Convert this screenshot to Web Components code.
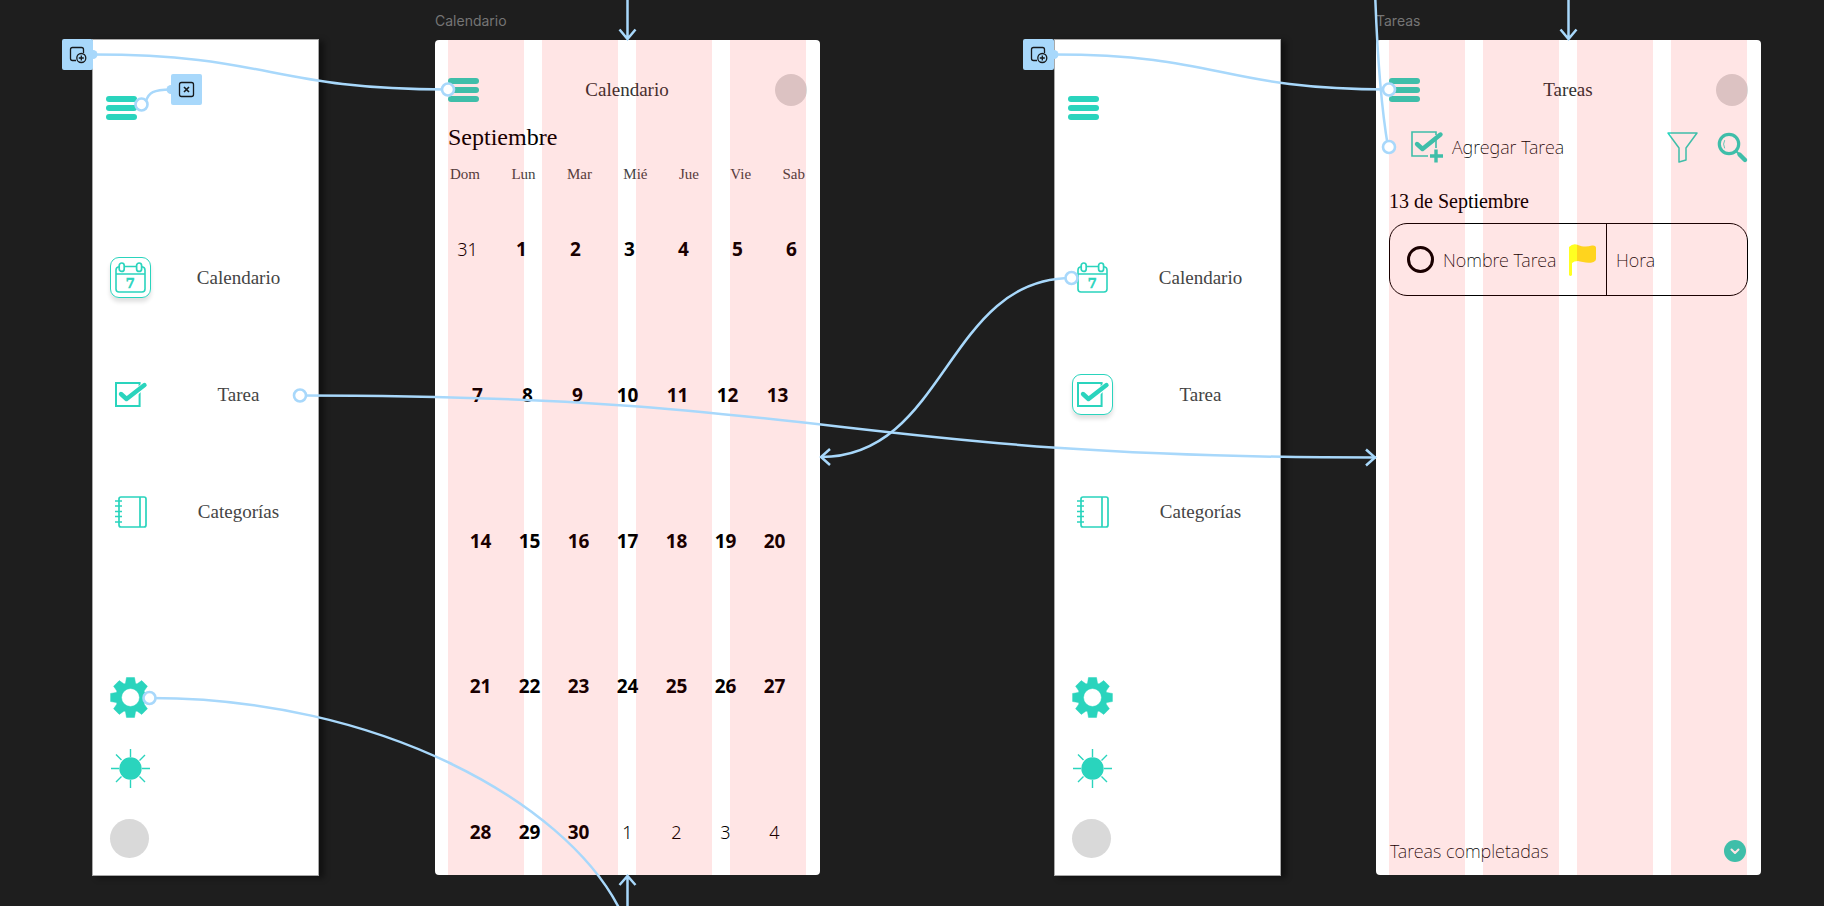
<!DOCTYPE html>
<html lang="es">
<head>
<meta charset="utf-8">
<title>Prototipo</title>
<style>
  html, body { margin: 0; height: 100%; }
  body {
    background: #1e1e1e;
    --teal: #2ad4bd;
    --link: #a8d8fb;
    --slab: "Liberation Serif", serif;
    --sans: "Noto Sans", sans-serif;
    font-family: var(--sans);
  }
  /* places of the frames on the free canvas */
  #menu-a { left: 92px; top: 39px; }
  #menu-b { left: 1054px; top: 39px; }
  #calendar { left: 435px; top: 40px; }
  #tasks { left: 1376px; top: 40px; }
  #add-a { left: 62px; top: 39px; }
  #add-b { left: 1023px; top: 39px; }
  #close-a { left: 171px; top: 74px; }
</style>
</head>
<body>
<design-canvas>
  <side-menu id="menu-a" active="calendario"></side-menu>
  <phone-frame id="calendar" name="Calendario"><month-view></month-view></phone-frame>
  <side-menu id="menu-b" active="tarea"></side-menu>
  <phone-frame id="tasks" name="Tareas"><task-view></task-view></phone-frame>
  <flow-links slot="over"></flow-links>
  <action-badge slot="over" id="add-a" kind="add" label="Abrir superposición"></action-badge>
  <action-badge slot="over" id="close-a" kind="close" label="Cerrar superposición"></action-badge>
  <action-badge slot="over" id="add-b" kind="add" label="Abrir superposición"></action-badge>
</design-canvas>

<script>
const gearPath = (() => {
  const pts = [];
  for (let i = 0; i < 8; i++) {
    const a = i * Math.PI / 4;
    for (const [r, d] of [[15, -0.34], [20.3, -0.2], [20.3, 0.2], [15, 0.34]]) {
      pts.push((20.5 + r * Math.sin(a + d)).toFixed(2) + ' ' + (20.5 - r * Math.cos(a + d)).toFixed(2));
    }
  }
  return 'M' + pts.join('L') + 'Z M29.5 20.5a9 9 0 1 0-18 0a9 9 0 1 0 18 0Z';
})();

const icons = {
  menu: [31, 24, `<g fill="currentColor"><rect width="31" height="6" rx="3"/><rect y="9" width="31" height="6" rx="3"/><rect y="18" width="31" height="6" rx="3"/></g>`],
  calendario: [31, 31, `<g fill="none" stroke="currentColor"><path stroke-width="1.6" d="M4 4.8Q1 5.2 1 8V27Q1 30 4 30H27Q30 30 30 27V8Q30 5.2 27 4.800M9.500 4.500H21M1 12H30"/><rect x="4.200" y="1" width="5" height="8.400" rx="2.500" stroke-width="1.700"/><rect x="21.600" y="1" width="5" height="8.400" rx="2.500" stroke-width="1.700"/></g><text x="15.200" y="25.500" text-anchor="middle" font-family="DejaVu Serif, serif" font-weight="700" font-size="13" fill="currentColor" stroke="currentColor" stroke-width=".6">7</text>`],
  tarea: [32, 25, `<rect x="1" y="1" width="23.6" height="23" fill="none" stroke="currentColor" stroke-width="2"/><g fill="none" stroke-linecap="round" stroke-linejoin="round"><path d="M14 16.500L29.500 3" stroke="#fff" stroke-width="6" stroke-linecap="butt"/><path d="M6 12L11.500 17L29.500 3" stroke="currentColor" stroke-width="4.400"/></g>`],
  categorias: [32, 32, `<g fill="none" stroke="currentColor" stroke-width="1.7"><rect x="4" y="1" width="27" height="30" rx="2"/><path d="M25 1V31"/><path d="M0 5H7M0 10H7M0 15.500H7M0 20.500H7M0 26H7" stroke-width="1.500"/></g>`],
  gear: [41, 41, `<path fill="currentColor" fill-rule="evenodd" stroke="currentColor" stroke-linejoin="round" stroke-width=".5" d="${gearPath}"/>`],
  sun: [41, 39, `<circle cx="20.500" cy="19.500" r="11.200" fill="currentColor"/><path fill="none" stroke="currentColor" stroke-width="1.400" d="M20.500 0V8M20.500 31V39M1 19.500H9M32 19.500H40M6 5.500L11.500 11M35 6L29.500 11.500M6 33L11.500 27.500M35 33L29.500 27.500"/>`],
  addTask: [32, 32, `<path d="M25 4V1H1V25H17M25 9V17" fill="none" stroke="currentColor" stroke-width="1.600"/><path d="M6 13L11.500 18L29.500 3.500" fill="none" stroke="currentColor" stroke-width="4.400" stroke-linecap="round" stroke-linejoin="round"/><path d="M25 18.500V31.500M19 25H32" stroke="currentColor" stroke-width="3.400"/>`],
  filter: [31, 31, `<path d="M1 1H30L19 16V28L12 30V16Z" fill="none" stroke="currentColor" stroke-width="1.500" stroke-linejoin="round"/>`],
  search: [31, 31, `<g fill="none" stroke="currentColor" stroke-linecap="round"><circle cx="12" cy="12" r="9.700" stroke-width="3.200"/><path d="M19.500 19.500L22 22" stroke-width="2"/><path d="M22.500 22.500L28 28" stroke-width="4.400"/><path d="M7.500 8.500Q5.500 12 7.500 16" stroke-width=".8"/></g>`],
  flag: [27, 32, `<path fill="#ffff22" d="M0 3Q4-1 9 1V17Q5 17 3 19V31Q1.500 33 0 31Z"/><path fill="#ffec22" d="M8 .7C14 3 18 3 23 1.500Q27 1 27 4V15Q27 17 24.500 18C19 20 14 18 8 16.800Z"/>`],
  down: [22, 22, `<circle cx="11" cy="11" r="11" fill="currentColor"/><path d="M7.500 9.500L11 13L14.500 9.500" fill="none" stroke="#fff" stroke-width="2" stroke-linecap="round" stroke-linejoin="round"/>`],
  add: [31, 31, `<g fill="none" stroke="#16191c" stroke-width="1.300"><path d="M14 21.500H10.500A2 2 0 0 1 8.500 19.500V10.500A2 2 0 0 1 10.500 8.500H19.500A2 2 0 0 1 21.500 10.500V14"/><circle cx="19.300" cy="19" r="4.500"/><path d="M16.800 19H21.800M19.300 16.500V21.500"/></g>`],
  close: [31, 31, `<g fill="none" stroke="#16191c" stroke-width="1.300"><rect x="8.500" y="8.500" width="14" height="14" rx="2"/><path d="M13 13L18 18M18 13L13 18" stroke-width="1.600"/></g>`]
};

const icon = name => {
  const [w, h, body] = icons[name];
  return `<svg width="${w}" height="${h}" viewBox="0 0 ${w} ${h}" aria-hidden="true">${body}</svg>`;
};

const reset = `
  * { box-sizing: border-box; }
  svg { display: block; flex: none; overflow: visible; }
  button { all: unset; box-sizing: border-box; display: block; flex: none; cursor: pointer; color: var(--teal); }
  a { color: inherit; text-decoration: none; }
  h1, h2, p { margin: 0; }
`;

class Base extends HTMLElement {
  connectedCallback() {
    if (this.shadowRoot) return;
    this.attachShadow({ mode: 'open' }).innerHTML = `<style>${reset}${this.css()}</style>${this.html()}`;
  }
}

customElements.define('design-canvas', class extends Base {
  css() { return `
    :host { display: block; position: relative; width: 100%; height: 100vh; overflow: hidden; background: #1e1e1e; }
    ::slotted(*) { position: absolute; }`; }
  html() { return `<slot></slot><slot name="over"></slot>`; }
});

customElements.define('side-menu', class extends Base {
  css() { return `
    :host { display: flex; flex-direction: column; box-sizing: border-box; width: 227px; height: 837px;
      padding: 56px 0 17px; background: #fff; border: 1px solid #a9a9a9; box-shadow: 5px 2px 6px rgba(0,0,0,.45); }
    .menu { margin-left: 13px; align-self: flex-start; }
    nav { display: flex; flex-direction: column; gap: 76px; margin-top: 137px; }
    nav a { display: flex; align-items: center; gap: 8px; padding-left: 17px; }
    .tile { display: grid; place-items: center; flex: none; width: 41px; height: 41px; border-radius: 9px; color: var(--teal); }
    .tile.on { border: 1px solid var(--teal); box-shadow: 0 4px 4px rgba(0,0,0,.12); }
    .name { flex: 1; text-align: center; font: 19px/24px var(--slab); color: #444; }
    .tools { display: flex; flex-direction: column; gap: 31px; margin-top: auto; padding-left: 17px; align-items: flex-start; }
    .user { width: 39px; height: 39px; border-radius: 50%; background: #d9d9d9; }`; }
  html() {
    const on = this.getAttribute('active');
    const item = (id, text) => `<a href="#${id}"><span class="tile${id === on ? ' on' : ''}">${icon(id)}</span><span class="name">${text}</span></a>`;
    return `
      <button class="menu" aria-label="Menú">${icon('menu')}</button>
      <nav>${item('calendario', 'Calendario')}${item('tarea', 'Tarea')}${item('categorias', 'Categorías')}</nav>
      <div class="tools">
        <button aria-label="Ajustes">${icon('gear')}</button>
        <button aria-label="Tema">${icon('sun')}</button>
        <button class="user" aria-label="Perfil"></button>
      </div>`;
  }
});

customElements.define('phone-frame', class extends Base {
  css() { return `
    :host { display: flex; flex-direction: column; box-sizing: border-box; width: 385px; height: 835px;
      padding: 34px 13px 0; background: #fff; border-radius: 4px; }
    .label { position: absolute; left: 0; bottom: 100%; padding-bottom: 10px; font: 14px/18px Inter, sans-serif; color: #757575; }
    header { display: flex; align-items: center; justify-content: space-between; height: 32px; }
    h1 { font: 19px/24px var(--slab); color: #333; }
    .user { width: 32px; height: 32px; border-radius: 50%; background: #d9d9d9; }
    /* the four-column layout grid, drawn over the content */
    .grid { position: absolute; inset: 0; display: grid; grid-template-columns: repeat(4, 76px); gap: 18px; padding-left: 13px; pointer-events: none; }
    .grid i { background: rgba(255,0,0,.1); }`; }
  html() {
    const n = this.getAttribute('name');
    return `
      <div class="label">${n}</div>
      <header>
        <button aria-label="Menú">${icon('menu')}</button>
        <h1>${n}</h1>
        <button class="user" aria-label="Perfil"></button>
      </header>
      <slot></slot>
      <div class="grid"><i></i><i></i><i></i><i></i></div>`;
  }
});

customElements.define('month-view', class extends Base {
  css() { return `
    :host { display: flex; flex-direction: column; flex: 1; padding-bottom: 29px; color: #000; }
    h2 { margin-top: 16px; font: 24px/30px var(--slab); }
    table { display: flex; flex-direction: column; flex: 1; margin-top: 10px; }
    thead, tbody { display: flex; flex-direction: column; }
    tbody { flex: 1; justify-content: space-between; margin-top: 49px; }
    tr { display: flex; justify-content: center; }
    thead tr { justify-content: space-between; padding: 0 2px; }
    th { padding: 0; font: 15px/24px var(--slab); color: #444; }
    td { flex: none; width: 49px; padding: 0; text-align: center; font-size: 19px; line-height: 28px; font-weight: 700; }
    td.out { font-weight: 300; font-size: 18px; }
    tr.first { padding-left: 4px; }
    tr.first td { width: 54px; }
    tr.second td { width: 50px; }`; }
  html() {
    const rows = [0, 7, 14, 21, 28].map((s, r) => {
      const cells = Array.from({ length: 7 }, (_, i) => {
        const d = s + i;
        return d === 0 ? '<td class="out">31</td>' : d > 30 ? `<td class="out">${d - 30}</td>` : `<td>${d}</td>`;
      }).join('');
      return `<tr class="${['first', 'second'][r] || ''}">${cells}</tr>`;
    }).join('');
    const head = ['Dom', 'Lun', 'Mar', 'Mié', 'Jue', 'Vie', 'Sab'].map(d => `<th scope="col">${d}</th>`).join('');
    return `<h2>Septiembre</h2><table><thead><tr>${head}</tr></thead><tbody>${rows}</tbody></table>`;
  }
});

customElements.define('task-view', class extends Base {
  css() { return `
    :host { display: flex; flex-direction: column; flex: 1; color: #000; font-weight: 200; font-size: 18px; line-height: 26px; }
    .bar { display: flex; align-items: center; margin-top: 25px; padding-left: 22px; }
    .bar .new { display: flex; align-items: center; gap: 9px; margin-right: auto; }
    .new span { color: #000; }
    .bar button + button { margin-left: 19px; }
    h2 { margin-top: 25px; font: 20px/26px var(--slab); }
    .card { display: flex; align-items: stretch; height: 73px; margin-top: 9px; border: 1px solid #000; border-radius: 18px; }
    .task { display: flex; align-items: center; width: 217px; padding-left: 17px; border-right: 1px solid #000; }
    label { display: flex; align-items: center; gap: 9px; flex: 1; white-space: nowrap; }
    input { appearance: none; flex: none; width: 27px; height: 27px; margin: 0; border: 3px solid #000; border-radius: 50%; }
    .task svg { margin-right: 10px; }
    .hour { padding-left: 9px; align-self: center; }
    footer { display: flex; align-items: center; justify-content: space-between; margin-top: auto; padding: 0 2px 11px 1px; }`; }
  html() { return `
    <div class="bar">
      <button class="new">${icon('addTask')}<span>Agregar Tarea</span></button>
      <button aria-label="Filtrar">${icon('filter')}</button>
      <button aria-label="Buscar">${icon('search')}</button>
    </div>
    <h2>13 de Septiembre</h2>
    <div class="card">
      <div class="task"><label><input type="checkbox">Nombre Tarea</label>${icon('flag')}</div>
      <span class="hour">Hora</span>
    </div>
    <footer><p>Tareas completadas</p><button aria-label="Mostrar completadas">${icon('down')}</button></footer>`; }
});

customElements.define('action-badge', class extends Base {
  css() { return `
    :host { display: block; }
    button { width: 31px; height: 31px; background: var(--link); border-radius: 2px; }`; }
  html() { return `<button aria-label="${this.getAttribute('label')}">${icon(this.getAttribute('kind'))}</button>`; }
});

customElements.define('flow-links', class extends Base {
  css() { return `
    :host { display: block; inset: 0; pointer-events: none; }
    path { fill: none; stroke: var(--link); stroke-width: 2.5; }
    .end { fill: #fff; stroke: var(--link); stroke-width: 2.6; }
    .dot { fill: var(--link); }`; }
  html() {
    const s = (x1, y1, x2, y2) => `<path d="M${x1} ${y1}C${(x1 + x2) / 2} ${y1} ${(x1 + x2) / 2} ${y2} ${x2} ${y2}"/>`;
    const end = (x, y) => `<circle class="end" cx="${x}" cy="${y}" r="6"/>`;
    const dot = (x, y) => `<circle class="dot" cx="${x}" cy="${y}" r="4.500"/>`;
    return `<svg width="100%" height="100%" aria-hidden="true">
      ${s(93, 54.5, 448, 89.5)}${s(1054, 54.5, 1389, 89.5)}
      ${s(300, 395.5, 1376, 457.5)}${s(1071.5, 278, 821, 457)}
      <path d="M146 101C149 92 153 90 171 89.500"/>
      <path d="M150 698C380 698 563 802 618 906L626 924"/>
      <path d="M1375 -10C1377 50 1380 100 1388 147"/>
      <path d="M627.500 0V39M619.500 29.500L627.500 39L635.500 29.500"/>
      <path d="M1568.500 0V39M1560.500 29.500L1568.500 39L1576.500 29.500"/>
      <path d="M627.500 910V876M619.500 885L627.500 876L635.500 885"/>
      <path d="M830 449L821 457L830 465M1366 449.500L1375 457.500L1366 465.500"/>
      ${dot(93, 54.5)}${dot(1054, 54.5)}${dot(171, 89.5)}
      ${end(141.5, 104.5)}${end(448, 89.5)}${end(300, 395.5)}${end(149.500, 698)}
      ${end(1071.5, 278)}${end(1389, 89.5)}${end(1389, 147)}
    </svg>`;
  }
});
</script>
</body>
</html>
